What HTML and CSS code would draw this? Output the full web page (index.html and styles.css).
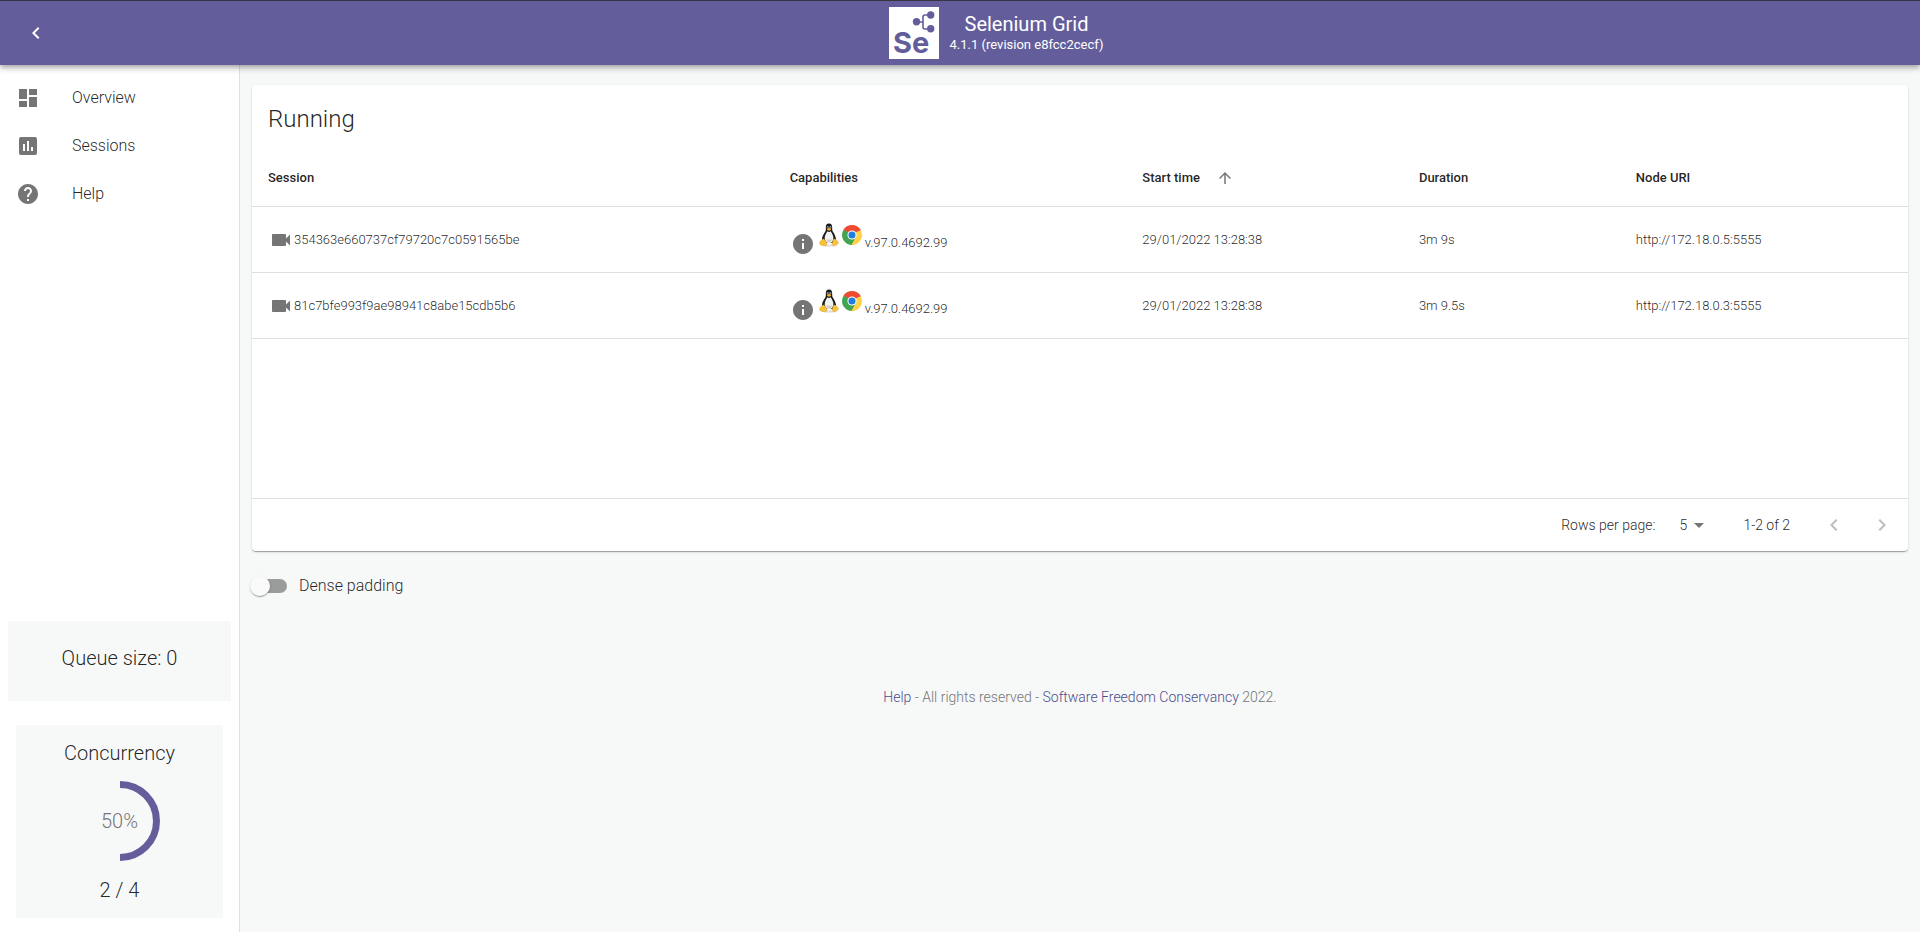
FILE: index.html
```html
<!DOCTYPE html>
<html lang="en">
<head>
<meta charset="utf-8">
<meta name="viewport" content="width=device-width, initial-scale=1">
<title>Selenium Grid</title>
<link rel="stylesheet" href="styles.css">
</head>
<body>
<svg class="sprite" aria-hidden="true">
  <symbol id="chevron-left" viewBox="0 0 24 24"><path d="M15.41 7.41 14 6l-6 6 6 6 1.41-1.41L10.83 12z"/></symbol>
  <symbol id="chevron-right" viewBox="0 0 24 24"><path d="M10 6 8.59 7.41 13.17 12l-4.58 4.59L10 18l6-6z"/></symbol>
  <symbol id="videocam" viewBox="0 0 24 24"><path d="M17 10.5V7c0-.55-.45-1-1-1H4c-.55 0-1 .45-1 1v10c0 .55.45 1 1 1h12c.55 0 1-.45 1-1v-3.500l4 4v-11l-4 4z"/></symbol>
  <symbol id="info" viewBox="0 0 24 24"><path d="M12 2C6.480 2 2 6.480 2 12s4.480 10 10 10 10-4.480 10-10S17.520 2 12 2zm1 15h-2v-6h2v6zm0-8h-2V7h2v2z"/></symbol>
  <symbol id="linux" viewBox="2.500 0 19 24">
    <ellipse cx="12" cy="22.500" rx="8" ry="1" fill="#ddd"/>
    <path fill="#191919" d="M12 .5c-2.200 0-3.300 1.600-3.200 3.900.1 2 .2 3-.8 4.600-1.300 2-2.800 4.200-3 6.700-.1 1.600.2 3.200 1.500 4.300h11c1.300-1 1.700-2.700 1.500-4.300-.3-2.500-1.700-4.700-2.900-6.700-1-1.600-.9-2.600-.9-4.600C15.200 2.100 14.200.5 12 .5z"/>
    <path fill="#f2f2f2" d="M10.200 8.200c-.4 1.600-2 3.400-2.400 5.600-.4 2.200.4 4.700 1.800 5.600 1.400.9 3.600.9 4.900 0 1.500-1 2.200-3.400 1.800-5.600-.4-2.200-1.900-4-2.500-5.600-1 .9-2.600.9-3.600 0z"/>
    <path fill="#cfcfcf" d="M9.500 15.500c1 1.600 4.300 1.600 5.300 0 .1 2.300-.7 4-2.700 4s-2.700-1.700-2.600-4z"/>
    <circle cx="10.700" cy="4.200" r="1" fill="#ccc"/><circle cx="13.400" cy="4.200" r="1" fill="#ccc"/>
    <circle cx="10.900" cy="4.300" r=".5" fill="#111"/><circle cx="13.200" cy="4.300" r=".5" fill="#111"/>
    <path fill="#f5b21c" d="M9.900 6.100C10.600 5.300 11.300 5 12 5s1.700.4 2.200 1.100c-.3 1-1.200 1.600-2.100 1.600s-2-.7-2.200-1.600z"/>
    <path fill="#f8c33a" stroke="#d99a1c" stroke-width=".4" d="M5.600 16.200c1-.9 2 .3 2.700 1.600.8 1.300 1.900 2.300 1.600 3.700-.3 1.400-2 1.600-3.400 1-1.300-.6-3-.5-3.700-1.300-.5-.8.3-1.600.2-2.600 0-1 1.800-.9 2.600-2.400zM18.300 16.200c-1-.6-1.900 0-2.300 1.400-.4 1.400-1 2.600-.7 3.900.4 1.300 2 1.500 3 .7.900-.8 2.800-1 3.200-1.900.3-.8-.8-1.100-.9-2.100-.2-1-1.400-1-2.300-2z"/>
  </symbol>
  <symbol id="chrome" viewBox="0 0 48 48">
    <path fill="#ee4a30" d="M24 24 3.220 12A24 24 0 0 1 44.780 12z"/>
    <path fill="#43a550" d="M24 24 24 48A24 24 0 0 1 3.220 12z"/>
    <path fill="#ffd24a" d="M24 24 44.780 12A24 24 0 0 1 24 48z"/>
    <path fill="#ee4a30" d="M24 13h20.780v-1L30 8z"/>
    <path fill="#43a550" d="M14.470 29.500 3.220 12 14 17z"/>
    <path fill="#43a550" d="M14.470 29.500 24 35l9.530-5.500L23 48z"/>
    <path fill="#ffd24a" d="M33.530 29.500 23 48h1l14-6z"/>
    <circle cx="24" cy="24" r="11" fill="#fff"/>
    <circle cx="24" cy="24" r="8.500" fill="#1a7fe0"/>
  </symbol>
</svg>

<header class="topbar">
  <button class="icon-button topbar-toggle" type="button" aria-label="Collapse menu"><svg class="icon"><use href="#chevron-left"/></svg></button>
  <div class="brand">
    <svg class="brand-logo" viewBox="0 0 50 52" role="img" aria-label="Selenium logo">
      <rect width="50" height="52" fill="#fff"/>
      <g fill="none" stroke="#635e9b" stroke-width="1.600"><path d="M27 15h7M41 8h-5q-2 0-2 2v10q0 2 2 2h5"/></g>
      <g fill="#635e9b"><circle cx="27.500" cy="14.700" r="3.700"/><circle cx="41.700" cy="8" r="3.700"/><circle cx="41.700" cy="21.700" r="3.700"/></g>
      <text class="brand-mark" x="4" y="46">Se</text>
    </svg>
    <div class="brand-text">
      <h1 class="brand-title">Selenium Grid</h1>
      <p class="brand-version">4.1.1 (revision e8fcc2cecf)</p>
    </div>
  </div>
</header>

<div class="layout">
  <aside class="sidebar">
    <nav class="menu">
      <a class="menu-item" href="#overview"><svg class="icon" viewBox="0 0 24 24"><path d="M3 13h8V3H3v10zm0 8h8v-6H3v6zm10 0h8V11h-8v10zm0-18v6h8V3h-8z"/></svg>Overview</a>
      <a class="menu-item" href="#sessions"><svg class="icon" viewBox="0 0 24 24"><path d="M19 3H5c-1.100 0-2 .9-2 2v14c0 1.100.9 2 2 2h14c1.100 0 2-.9 2-2V5c0-1.100-.9-2-2-2zM9 17H7v-7h2v7zm4 0h-2V7h2v10zm4 0h-2v-4h2v4z"/></svg>Sessions</a>
      <a class="menu-item" href="#help"><svg class="icon" viewBox="0 0 24 24"><path d="M12 2C6.480 2 2 6.480 2 12s4.480 10 10 10 10-4.480 10-10S17.520 2 12 2zm1 17h-2v-2h2v2zm2.070-7.750-.9.920C13.450 12.900 13 13.500 13 15h-2v-.5c0-1.100.45-2.100 1.170-2.830l1.240-1.260c.37-.36.59-.86.59-1.410 0-1.100-.9-2-2-2s-2 .9-2 2H8c0-2.210 1.790-4 4-4s4 1.790 4 4c0 .88-.36 1.680-.93 2.250z"/></svg>Help</a>
    </nav>
    <section class="queue">Queue size: 0</section>
    <section class="concurrency">
      <h2 class="concurrency-title">Concurrency</h2>
      <div class="gauge">
        <svg class="gauge-ring" viewBox="0 0 80 80" aria-hidden="true"><path d="M40 3.500a36.500 36.500 0 0 1 0 73" fill="none" stroke="#635e9b" stroke-width="7"/></svg>
        <span class="gauge-value">50%</span>
      </div>
      <p class="concurrency-count">2 / 4</p>
    </section>
  </aside>

  <main class="content">
    <section class="card">
      <h2 class="card-title">Running</h2>
      <table class="sessions">
        <colgroup><col class="col-session"><col class="col-caps"><col class="col-start"><col class="col-duration"><col class="col-node"></colgroup>
        <thead>
          <tr>
            <th scope="col">Session</th>
            <th scope="col">Capabilities</th>
            <th scope="col" aria-sort="ascending"><button class="sort" type="button">Start time<svg class="icon icon-sort" viewBox="0 0 24 24"><path d="m4 12 1.410 1.410L11 7.830V20h2V7.830l5.580 5.590L20 12l-8-8-8 8z"/></svg></button></th>
            <th scope="col">Duration</th>
            <th scope="col">Node URI</th>
          </tr>
        </thead>
        <tbody>
          <tr>
            <td><div class="session"><button class="icon-button" type="button" aria-label="Live view"><svg class="icon"><use href="#videocam"/></svg></button>354363e660737cf79720c7c0591565be</div></td>
            <td><div class="caps"><button class="icon-button caps-info" type="button" aria-label="Session details"><svg class="icon"><use href="#info"/></svg></button><svg class="os-logo"><use href="#linux"/></svg><svg class="browser-logo"><use href="#chrome"/></svg><span class="caps-version">v.97.0.4692.99</span></div></td>
            <td>29/01/2022 13:28:38</td>
            <td>3m 9s</td>
            <td>http://172.18.0.5:5555</td>
          </tr>
          <tr>
            <td><div class="session"><button class="icon-button" type="button" aria-label="Live view"><svg class="icon"><use href="#videocam"/></svg></button>81c7bfe993f9ae98941c8abe15cdb5b6</div></td>
            <td><div class="caps"><button class="icon-button caps-info" type="button" aria-label="Session details"><svg class="icon"><use href="#info"/></svg></button><svg class="os-logo"><use href="#linux"/></svg><svg class="browser-logo"><use href="#chrome"/></svg><span class="caps-version">v.97.0.4692.99</span></div></td>
            <td>29/01/2022 13:28:38</td>
            <td>3m 9.5s</td>
            <td>http://172.18.0.3:5555</td>
          </tr>
          <tr class="filler"><td colspan="5"></td></tr>
        </tbody>
      </table>
      <div class="pagination">
        <label class="pagination-label" for="rows">Rows per page:</label>
        <div class="rows-select">
          <select id="rows"><option>5</option><option>10</option><option>15</option></select>
          <svg class="rows-arrow" viewBox="0 0 24 24" aria-hidden="true"><path d="m7 10 5 5 5-5z"/></svg>
        </div>
        <span class="pagination-range">1-2 of 2</span>
        <button class="icon-button page-button" type="button" aria-label="Previous page" disabled><svg class="icon"><use href="#chevron-left"/></svg></button>
        <button class="icon-button page-button" type="button" aria-label="Next page" disabled><svg class="icon"><use href="#chevron-right"/></svg></button>
      </div>
    </section>
    <label class="switch"><input class="switch-input" type="checkbox">Dense padding</label>
    <footer class="footer"><a href="#help">Help</a> - All rights reserved - <a href="#conservancy">Software Freedom Conservancy</a> 2022.</footer>
  </main>
</div>
</body>
</html>
```

FILE: styles.css
```css
* { box-sizing: border-box; }

body {
  margin: 0;
  min-height: 100vh;
  display: flex;
  flex-direction: column;
  background: #f7f9f9;
  color: rgba(0, 0, 0, 0.87);
  font-family: Roboto, "Liberation Sans", sans-serif;
  font-size: 16px;
  font-weight: 300;
  line-height: 24px;
}

h1, h2, p { margin: 0; font-weight: inherit; }
a { color: inherit; text-decoration: none; }
button, select { font: inherit; color: inherit; }

.sprite { position: absolute; width: 0; height: 0; }
.icon { display: block; width: 24px; height: 24px; fill: currentColor; flex: none; }
.icon-sort { width: 18px; height: 18px; color: #757575; }

.icon-button {
  display: flex;
  align-items: center;
  justify-content: center;
  padding: 0;
  border: 0;
  background: none;
  color: #757575;
}

/* Top bar */
.topbar {
  position: relative;
  z-index: 1;
  display: flex;
  align-items: center;
  height: 65px;
  padding-left: 12px;
  border-top: 1px solid #343541;
  background: #635e9b;
  color: #fff;
  box-shadow: 0 2px 4px -1px rgba(0, 0, 0, 0.2), 0 4px 5px rgba(0, 0, 0, 0.14), 0 1px 10px rgba(0, 0, 0, 0.12);
}
.topbar-toggle { width: 48px; height: 48px; margin-right: 12px; color: #fff; }
.brand { flex: 1; display: flex; align-items: center; justify-content: center; gap: 11px; }
.brand-logo { width: 50px; height: 52px; }
.brand-mark { font-family: Inter, "Liberation Sans", sans-serif; font-size: 29px; font-weight: 700; fill: #635e9b; }
.brand-text { padding-top: 2px; text-align: center; font-weight: 400; }
.brand-title { font-size: 20px; line-height: 22px; }
.brand-version { font-size: 13px; line-height: 20px; }

/* Sidebar */
.layout { flex: 1; display: flex; }
.sidebar {
  flex: none;
  width: 240px;
  display: flex;
  flex-direction: column;
  padding: 9px 8px 14px;
  border-right: 1px solid #dfe0e0;
  background: #fff;
}
.menu { margin-bottom: auto; }
.menu-item { display: flex; align-items: center; gap: 32px; height: 48px; padding-left: 8px; }
.menu-item .icon { color: #757575; }
.queue { height: 80px; padding-top: 25px; margin-bottom: 24px; background: #f7f9f9; text-align: center; font-size: 20px; }
.concurrency { margin: 0 8px; padding: 16px 0; background: #f7f9f9; text-align: center; font-size: 20px; }
.concurrency-title { font-size: 20px; }
.gauge { display: grid; place-items: center; margin: 16px 0 17px; }
.gauge-ring, .gauge-value { grid-area: 1 / 1; }
.gauge-ring { width: 80px; height: 80px; }
.gauge-value { color: #757575; }

/* Sessions card */
.content { flex: 1; min-width: 0; padding: 20px 12px; }
.card {
  border-radius: 4px;
  background: #fff;
  box-shadow: 0 2px 1px -1px rgba(0, 0, 0, 0.2), 0 1px 1px rgba(0, 0, 0, 0.14), 0 1px 3px rgba(0, 0, 0, 0.12);
}
.card-title { padding: 18px 16px 14px; font-size: 24px; line-height: 32px; }

.sessions { width: 100%; border-collapse: separate; border-spacing: 0; table-layout: fixed; font-size: 13px; line-height: 20px; }
.col-session { width: 31.5%; }
.col-caps { width: 21.3%; }
.col-start { width: 16.7%; }
.col-duration { width: 13.1%; }
.sessions th, .sessions td { padding: 0 16px; border-bottom: 1px solid #e0e0e0; text-align: left; }
.sessions th { height: 58px; font-weight: 500; }
.sessions td { height: 66px; }
.sessions .filler td { height: 160px; }
.sort { display: flex; align-items: center; gap: 16px; padding: 0; border: 0; background: none; }
.session { display: flex; align-items: center; gap: 1px; padding-left: 1px; }
.caps { display: flex; align-items: flex-start; }
.caps-info { margin: 9px 4px 0 1px; }
.os-logo { width: 20px; height: 24px; }
.browser-logo { width: 20px; height: 20px; margin: 2px 3px 0; }
.caps-version { margin-top: 10px; }

/* Pagination */
.pagination { display: flex; align-items: center; justify-content: flex-end; height: 52px; padding-right: 2px; font-size: 14px; line-height: 20px; }
.rows-select { position: relative; margin: 0 32px 0 16px; }
.rows-select select { appearance: none; width: 40px; height: 24px; padding: 0 24px 0 8px; border: 0; background: none; }
.rows-arrow { position: absolute; top: 0; right: 0; width: 24px; height: 24px; fill: #757575; pointer-events: none; }
.pagination-range { margin-right: 20px; }
.page-button { width: 48px; height: 48px; color: #bdbdbd; }

/* Dense padding switch */
.switch { display: inline-flex; align-items: center; gap: 12px; margin-top: 23px; }
.switch-input {
  appearance: none;
  position: relative;
  width: 34px;
  height: 14px;
  margin: 0 0 0 1px;
  border-radius: 7px;
  background: #9a9b9b;
}
.switch-input::before {
  content: "";
  position: absolute;
  top: -3px;
  left: -3px;
  width: 20px;
  height: 20px;
  border-radius: 50%;
  background: #fafafa;
  box-shadow: 0 2px 1px -1px rgba(0, 0, 0, 0.2), 0 1px 1px rgba(0, 0, 0, 0.14), 0 1px 3px rgba(0, 0, 0, 0.12);
}

.footer { margin-top: 87px; text-align: center; font-size: 14px; line-height: 20px; color: #757575; }
.footer a { color: #4f4b8c; }
```
